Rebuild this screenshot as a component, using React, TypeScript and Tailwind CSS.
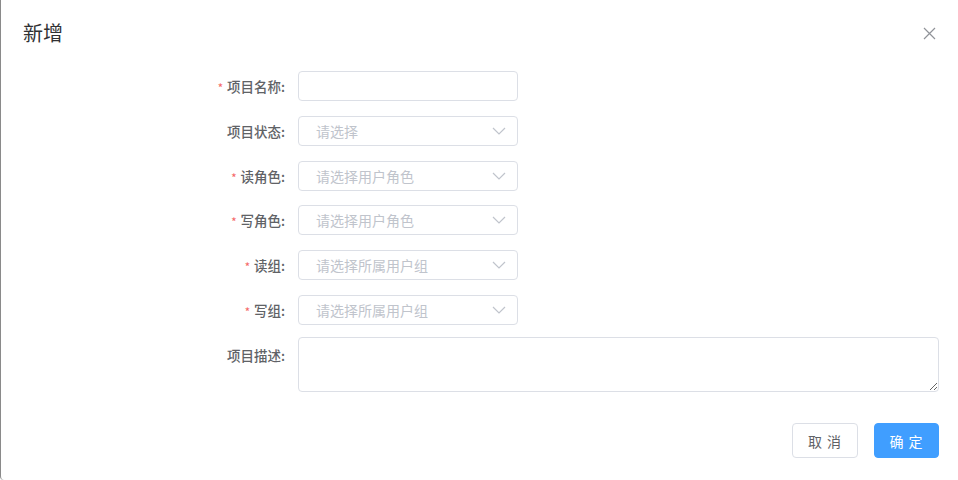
const font = { fontFamily: '"Microsoft YaHei", "Noto Sans CJK SC", "Liberation Sans", sans-serif' };

interface RowProps {
  label: string;
  required?: boolean;
  children: React.ReactNode;
  className?: string;
}

function FormRow({ label, required, children, className }: RowProps) {
  return (
    <div className={"flex items-center " + (className ?? "")}>
      <label className="w-[297px] shrink-0 pr-[13px] text-right text-[13.5px] font-medium text-[#606266]">
        {required && <span className="mr-1 text-[11px] text-[#f56c6c]">*</span>}
        {label}:
      </label>
      {children}
    </div>
  );
}

function Chevron() {
  return (
    <svg width="14" height="8" viewBox="0 0 14 8" fill="none">
      <polyline points="1,1 7,7 13,1" stroke="#c0c4cc" strokeWidth="1.2" />
    </svg>
  );
}

function SelectBox({ placeholder }: { placeholder: string }) {
  return (
    <div className="flex h-[30px] w-[220px] items-center justify-between rounded border border-[#dcdfe6] bg-white pl-[17px] pr-[11px]">
      <span className="text-sm text-[#c0c4cc]">{placeholder}</span>
      <Chevron />
    </div>
  );
}

export default function App() {
  return (
    <div style={font} className="h-[480px] w-full overflow-hidden rounded-bl bg-white border-l border-[#8a8a8a]">
      <div className="flex items-center justify-between pl-[22px] pr-[22px] pt-[21px]">
        <h2 className="text-[20px] leading-6 text-[#303133]">新增</h2>
        <svg width="13" height="13" viewBox="0 0 13 13" fill="none">
          <path d="M1 1 L12 12 M12 1 L1 12" stroke="#909399" strokeWidth="1.2" />
        </svg>
      </div>

      <div className="mt-[26px] pr-[19px]">
        <FormRow label="项目名称" required>
          <input className="h-[30px] w-[220px] rounded border border-[#dcdfe6] bg-white px-4 text-sm outline-none" />
        </FormRow>
        <FormRow label="项目状态" className="mt-[15px]">
          <SelectBox placeholder="请选择" />
        </FormRow>
        <FormRow label="读角色" required className="mt-[15px]">
          <SelectBox placeholder="请选择用户角色" />
        </FormRow>
        <FormRow label="写角色" required className="mt-[14px]">
          <SelectBox placeholder="请选择用户角色" />
        </FormRow>
        <FormRow label="读组" required className="mt-[15px]">
          <SelectBox placeholder="请选择所属用户组" />
        </FormRow>
        <FormRow label="写组" required className="mt-[15px]">
          <SelectBox placeholder="请选择所属用户组" />
        </FormRow>
        <div className="mt-[12px] flex items-start">
          <label className="w-[297px] shrink-0 pr-[13px] pt-[8px] text-right text-[13.5px] font-medium text-[#606266]">
            项目描述:
          </label>
          <textarea className="h-[55px] flex-1 resize-y rounded border border-[#dcdfe6] bg-white px-4 py-1 text-sm outline-none" />
        </div>
      </div>

      <div className="mt-[31px] flex justify-end gap-4 pr-[19px]">
        <button className="h-[35px] w-[66px] rounded border border-[#dcdfe6] bg-white text-sm tracking-[1px] text-[#606266]">
          取 消
        </button>
        <button className="h-[35px] w-[65px] rounded border border-[#409eff] bg-[#409eff] text-sm tracking-[1px] text-white">
          确 定
        </button>
      </div>
    </div>
  );
}
